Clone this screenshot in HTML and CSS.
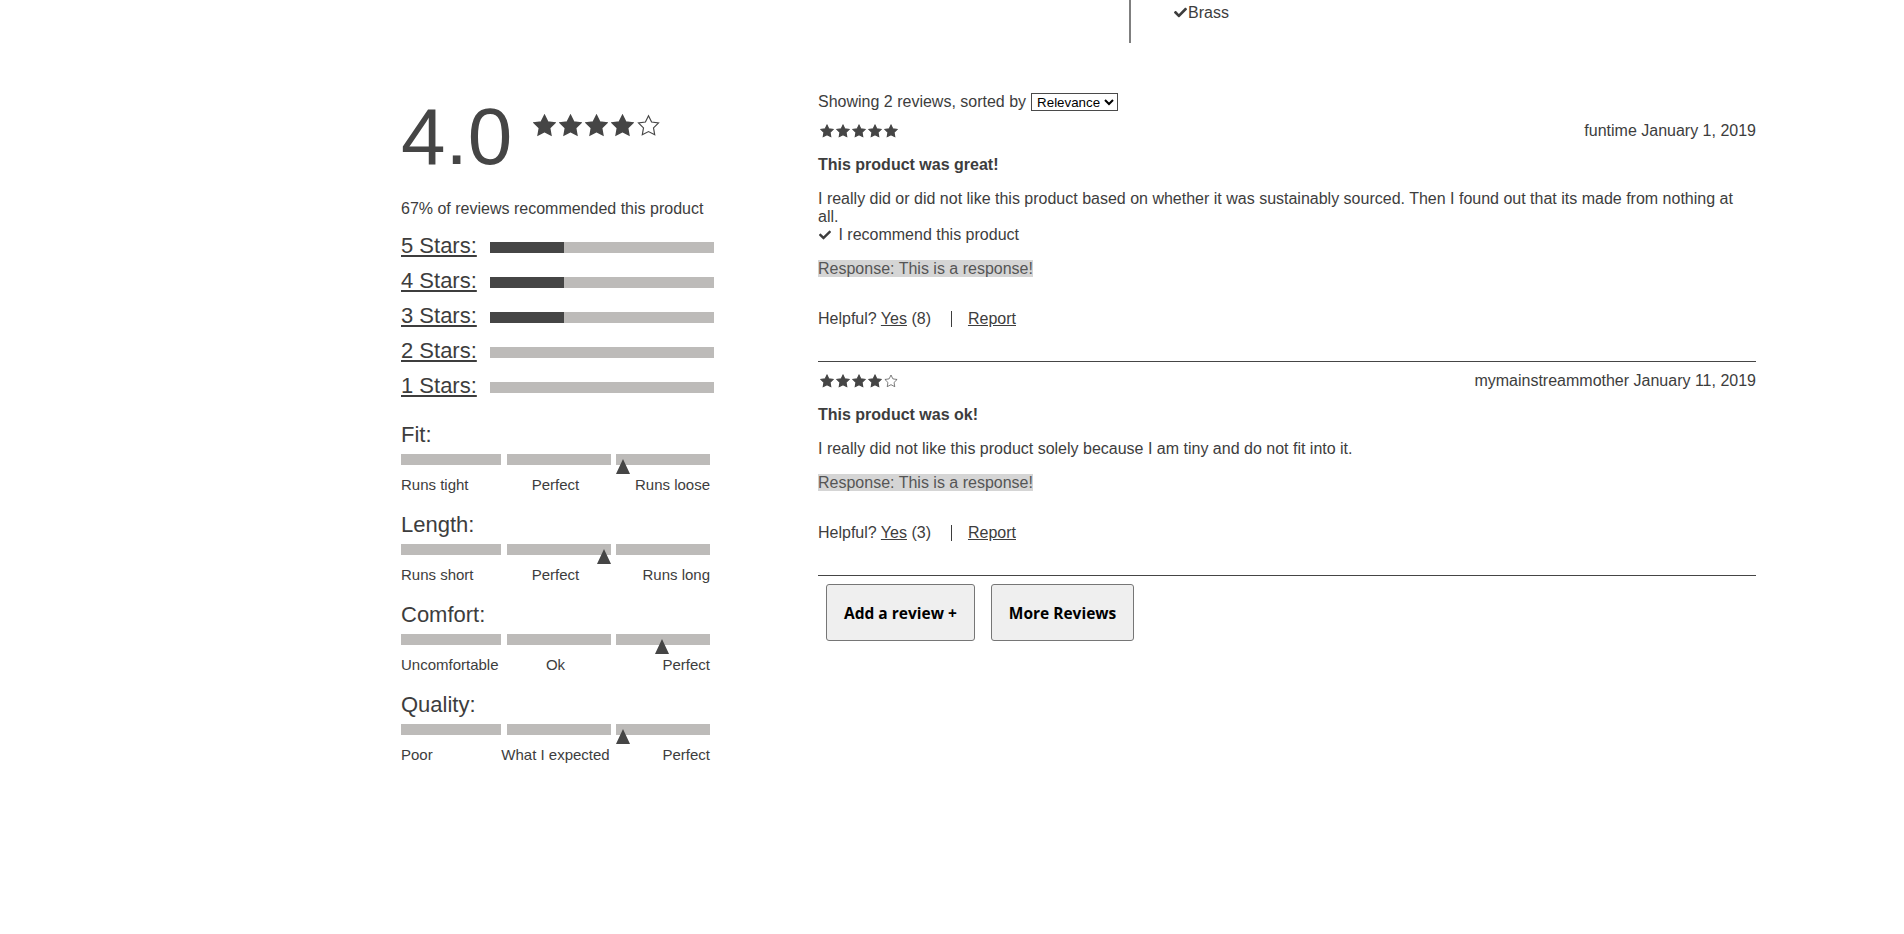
FILE: index.html
```html
<!DOCTYPE html>
<html lang="en">
<head>
    <meta charset="UTF-8">
    <meta name="viewport" content="width=device-width, initial-scale=1.0">
    <title>Reviews</title>
    <link rel="stylesheet" href="styles.css">
</head>
<body>
    <svg class="icon-defs" aria-hidden="true">
        <symbol id="star" viewBox="0 0 24 24">
            <polygon points="12,1.8 15.23,8.35 22.46,9.4 17.23,14.5 18.47,21.7 12,18.3 5.53,21.7 6.77,14.5 1.54,9.4 8.77,8.35"/>
        </symbol>
        <symbol id="check" viewBox="0 0 512 512">
            <path d="M173.898 439.404l-166.4-166.4c-9.997-9.997-9.997-26.206 0-36.204l36.203-36.204c9.997-9.998 26.207-9.998 36.204 0L192 312.69 432.095 72.596c9.997-9.997 26.207-9.997 36.204 0l36.203 36.204c9.997 9.997 9.997 26.206 0 36.204l-294.4 294.401c-9.998 9.997-26.207 9.997-36.204-.001z"/>
        </symbol>
    </svg>

    <div class="top-strip">
        <div class="material-list">
            <div class="material"><svg class="check"><use href="#check"/></svg>Brass</div>
        </div>
    </div>

    <main class="reviews-section">
        <section class="breakdown">
            <div class="score-row">
                <div class="score">4.0</div>
                <div class="score-stars">
                    <svg class="star full"><use href="#star"/></svg>
                    <svg class="star full"><use href="#star"/></svg>
                    <svg class="star full"><use href="#star"/></svg>
                    <svg class="star full"><use href="#star"/></svg>
                    <svg class="star empty"><use href="#star"/></svg>
                </div>
            </div>
            <p class="recommend-pct">67% of reviews recommended this product</p>

            <div class="star-rows">
                <div class="star-row">
                    <a href="#" class="star-label">5 Stars:</a>
                    <div class="star-bar"><div class="star-fill" style="width: 33%"></div></div>
                </div>
                <div class="star-row">
                    <a href="#" class="star-label">4 Stars:</a>
                    <div class="star-bar"><div class="star-fill" style="width: 33%"></div></div>
                </div>
                <div class="star-row">
                    <a href="#" class="star-label">3 Stars:</a>
                    <div class="star-bar"><div class="star-fill" style="width: 33%"></div></div>
                </div>
                <div class="star-row">
                    <a href="#" class="star-label">2 Stars:</a>
                    <div class="star-bar"><div class="star-fill" style="width: 0%"></div></div>
                </div>
                <div class="star-row">
                    <a href="#" class="star-label">1 Stars:</a>
                    <div class="star-bar"><div class="star-fill" style="width: 0%"></div></div>
                </div>
            </div>

            <div class="characteristics">
                <div class="char">
                    <div class="char-title">Fit:</div>
                    <div class="char-bars">
                        <div class="seg seg1"></div><div class="seg seg2"></div><div class="seg seg3"></div>
                        <div class="pointer" style="left: 71.8%"></div>
                    </div>
                    <div class="char-labels"><span>Runs tight</span><span>Perfect</span><span>Runs loose</span></div>
                </div>
                <div class="char">
                    <div class="char-title">Length:</div>
                    <div class="char-bars">
                        <div class="seg seg1"></div><div class="seg seg2"></div><div class="seg seg3"></div>
                        <div class="pointer" style="left: 65.7%"></div>
                    </div>
                    <div class="char-labels"><span>Runs short</span><span>Perfect</span><span>Runs long</span></div>
                </div>
                <div class="char">
                    <div class="char-title">Comfort:</div>
                    <div class="char-bars">
                        <div class="seg seg1"></div><div class="seg seg2"></div><div class="seg seg3"></div>
                        <div class="pointer" style="left: 84.5%"></div>
                    </div>
                    <div class="char-labels"><span>Uncomfortable</span><span>Ok</span><span>Perfect</span></div>
                </div>
                <div class="char">
                    <div class="char-title">Quality:</div>
                    <div class="char-bars">
                        <div class="seg seg1"></div><div class="seg seg2"></div><div class="seg seg3"></div>
                        <div class="pointer" style="left: 71.8%"></div>
                    </div>
                    <div class="char-labels"><span>Poor</span><span>What I expected</span><span>Perfect</span></div>
                </div>
            </div>
        </section>

        <section class="review-list">
            <div class="sort-line">
                <span>Showing 2 reviews, sorted by</span>
                <select class="sort-select">
                    <option>Relevance</option>
                    <option>Newest</option>
                    <option>Helpful</option>
                </select>
            </div>

            <div class="review">
                <div class="review-head">
                    <div class="review-stars">
                        <svg class="star full"><use href="#star"/></svg>
                        <svg class="star full"><use href="#star"/></svg>
                        <svg class="star full"><use href="#star"/></svg>
                        <svg class="star full"><use href="#star"/></svg>
                        <svg class="star full"><use href="#star"/></svg>
                    </div>
                    <div class="review-meta">funtime January 1, 2019</div>
                </div>
                <p class="review-title">This product was great!</p>
                <div class="review-body">
                    I really did or did not like this product based on whether it was sustainably sourced. Then I found out that its made from nothing at all.
                    <div class="recommends"><svg class="check"><use href="#check"/></svg> I recommend this product</div>
                </div>
                <p class="response"><span>Response: This is a response!</span></p>
                <div class="helpful">
                    Helpful? <a href="#">Yes</a> (8)<span class="divider"></span><a href="#">Report</a>
                </div>
            </div>

            <div class="review">
                <div class="review-head">
                    <div class="review-stars">
                        <svg class="star full"><use href="#star"/></svg>
                        <svg class="star full"><use href="#star"/></svg>
                        <svg class="star full"><use href="#star"/></svg>
                        <svg class="star full"><use href="#star"/></svg>
                        <svg class="star empty"><use href="#star"/></svg>
                    </div>
                    <div class="review-meta">mymainstreammother January 11, 2019</div>
                </div>
                <p class="review-title">This product was ok!</p>
                <div class="review-body">
                    I really did not like this product solely because I am tiny and do not fit into it.
                </div>
                <p class="response"><span>Response: This is a response!</span></p>
                <div class="helpful">
                    Helpful? <a href="#">Yes</a> (3)<span class="divider"></span><a href="#">Report</a>
                </div>
            </div>

            <div class="actions">
                <button class="action-btn">Add a review +</button>
                <button class="action-btn">More Reviews</button>
            </div>
        </section>
    </main>
</body>
</html>
```

FILE: styles.css
```css
body {
    margin: 0;
    font-family: "Liberation Sans", Arial, sans-serif;
    font-size: 16px;
    color: #3d3d3d;
    background: #fff;
}
a {
    color: inherit;
}
.icon-defs {
    position: absolute;
    width: 0;
    height: 0;
    overflow: hidden;
}
.star polygon {
    stroke-linejoin: round;
}
.star.full {
    fill: #454545;
    stroke: #454545;
    stroke-width: 1.8;
}
.star.empty {
    fill: none;
    stroke: #454545;
    stroke-width: 1.2;
}
.check {
    width: 14px;
    height: 12px;
    fill: #3d3d3d;
    vertical-align: -1px;
}

/* top strip, tail of the product details above */
.top-strip {
    display: flex;
    padding-left: 1129px;
}
.material-list {
    height: 43px;
    box-sizing: border-box;
    border-left: 2px solid #7f7f7f;
    padding: 4px 0 0 42px;
}
.material .check {
    width: 15px;
    height: 13px;
}

.reviews-section {
    display: flex;
    padding: 48px 0 60px 401px;
}

/* left: rating breakdown */
.breakdown {
    width: 417px;
    flex-shrink: 0;
}
.score-row {
    display: flex;
    align-items: flex-start;
}
.score {
    font-size: 80px;
    color: #454545;
}
.score-stars {
    display: flex;
    gap: 3px;
    margin: 23px 0 0 21px;
}
.score-stars .star {
    width: 23px;
    height: 23px;
}
.recommend-pct {
    margin: 17px 0 0;
}
.star-rows {
    margin-top: 15px;
}
.star-row {
    display: flex;
    align-items: baseline;
    gap: 13px;
    margin-bottom: 10px;
}
.star-label {
    font-size: 22px;
    line-height: 25px;
}
.star-bar {
    width: 224px;
    height: 11px;
    background: #bdbbb9;
}
.star-fill {
    height: 100%;
    background: #454545;
}

.characteristics {
    margin-top: 24px;
}
.char {
    margin-bottom: 19px;
}
.char-title {
    font-size: 22px;
    line-height: 25px;
}
.char-bars {
    position: relative;
    display: flex;
    width: 309px;
    margin-top: 7px;
}
.seg {
    height: 11px;
    background: #bdbbb9;
}
.seg1 {
    width: 100px;
}
.seg2 {
    width: 104px;
    margin-left: 6px;
}
.seg3 {
    width: 94px;
    margin-left: 5px;
}
.pointer {
    position: absolute;
    top: 5px;
    width: 0;
    height: 0;
    border-left: 7.5px solid transparent;
    border-right: 7.5px solid transparent;
    border-bottom: 15px solid #454545;
    transform: translateX(-50%);
}
.char-labels {
    display: grid;
    grid-template-columns: 1fr auto 1fr;
    width: 309px;
    margin-top: 11px;
    font-size: 15px;
    line-height: 17px;
}
.char-labels span:nth-child(2) {
    text-align: center;
}
.char-labels span:last-child {
    text-align: right;
}

/* right: review list */
.review-list {
    width: 938px;
    padding-top: 1px;
}
.sort-line {
    display: flex;
    align-items: center;
    gap: 5px;
    height: 20px;
}
.sort-select {
    height: 18px;
    font-family: "Liberation Sans", Arial, sans-serif;
    font-size: 13.33px;
    color: #000;
    background: #fff;
    border: 1px solid #4a4a4a;
    border-radius: 0;
    padding: 0 1px;
}
.review {
    padding: 10px 0 33px;
    border-bottom: 1px solid #454545;
}
.review-head {
    display: flex;
    justify-content: space-between;
    align-items: center;
}
.review-stars {
    display: flex;
    gap: 2px;
    padding-left: 2px;
}
.review-stars .star {
    width: 14px;
    height: 14px;
}
.review-title {
    margin: 16px 0 0;
    font-weight: bold;
}
.review-body {
    margin-top: 16px;
}
.recommends .check {
    margin-right: 2px;
}
.response {
    margin: 16px 0 0;
}
.response span {
    background: #d5d5d5;
    color: #555;
}
.helpful {
    margin-top: 32px;
}
.divider {
    display: inline-block;
    width: 1px;
    height: 16px;
    background: #3d3d3d;
    margin: 0 16px 0 20px;
    vertical-align: -3px;
}

.actions {
    display: flex;
    gap: 16px;
    padding: 8px;
}
.action-btn {
    height: 57px;
    padding: 0 17px;
    font-family: "Open Sans", sans-serif;
    font-weight: 700;
    font-size: 15.5px;
    color: #000;
    background: #efefef;
    border: 1px solid #767676;
    border-radius: 3px;
}
```
